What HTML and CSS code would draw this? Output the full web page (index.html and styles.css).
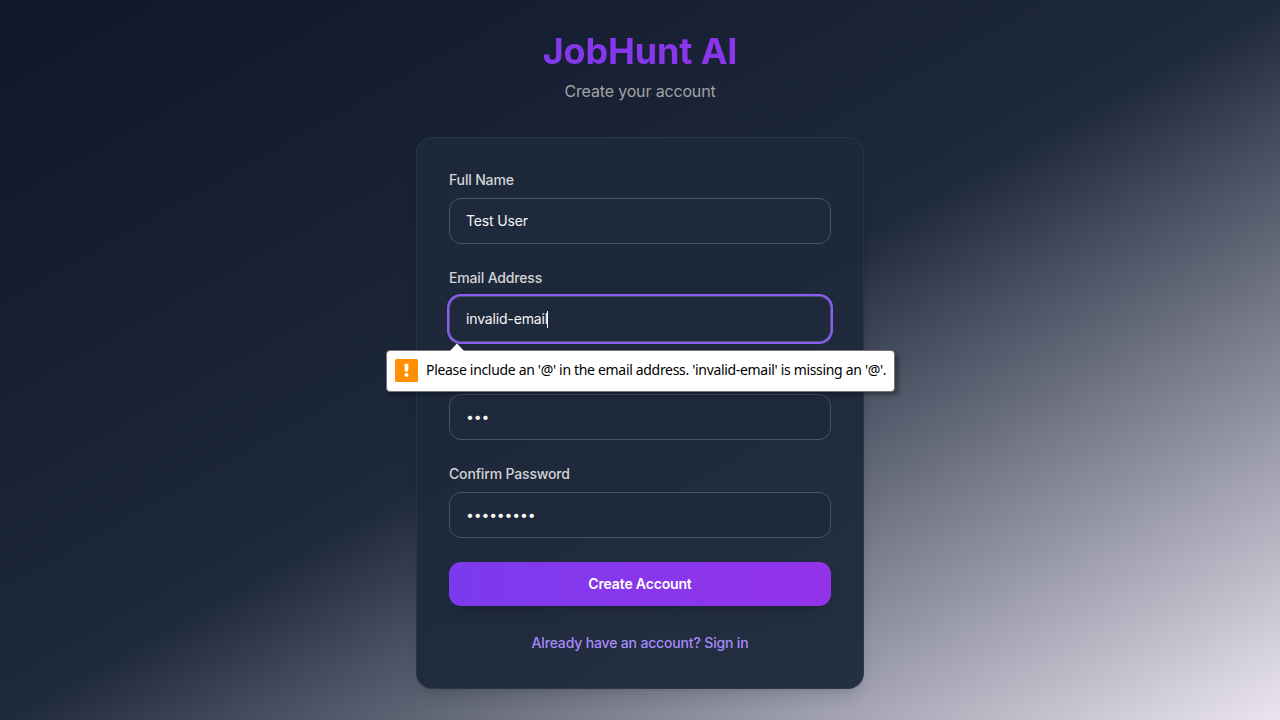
FILE: index.html
```html
<!DOCTYPE html>
<html lang="en">
<head>
<meta charset="utf-8">
<title>JobHunt AI</title>
<link rel="stylesheet" href="styles.css">
</head>
<body>
<main class="page">
  <header class="header">
    <h1 class="title">JobHunt AI</h1>
    <p class="subtitle">Create your account</p>
  </header>
  <section class="card">
    <div class="field">
      <div class="label">Full Name</div>
      <div class="input">Test User</div>
    </div>
    <div class="field">
      <div class="label">Email Address</div>
      <div class="input focused">invalid-email<span class="caret"></span>
        <div class="tooltip">
          <svg class="arrow" width="16" height="9" viewBox="0 0 16 9"><path d="M0 9 L8 0.5 L16 9Z" fill="#fff"/></svg>
          <svg class="warn" width="23" height="23" viewBox="0 0 23 23"><rect width="23" height="23" rx="1.5" fill="#ff8f00"/><path d="M9.5 4.8h4l-.4 7.8H9.9z" fill="#fff"/><circle cx="11.5" cy="16" r="2" fill="#fff"/></svg>
          <span class="message">Please include an '@' in the email address. 'invalid-email' is missing an '@'.</span>
        </div>
      </div>
    </div>
    <div class="field">
      <div class="label"></div>
      <div class="input"><span class="dots">•••</span></div>
    </div>
    <div class="field">
      <div class="label">Confirm Password</div>
      <div class="input"><span class="dots">•••••••••</span></div>
    </div>
    <div class="button">Create Account</div>
    <div class="link">Already have an account? Sign in</div>
  </section>
</main>
</body>
</html>
```
FILE: styles.css
```css
* { box-sizing: border-box; }
body {
  margin: 0;
  height: 720px;
  overflow: hidden;
  font-family: Inter, sans-serif;
  font-size: 14px;
  line-height: 20px;
  letter-spacing: -0.16px;
}
.page {
  height: 720px;
  padding-top: 31px;
  display: flex;
  flex-direction: column;
  align-items: center;
  background: linear-gradient(to bottom right, #0f172a, #1e293b 50%, #ebe5f1);
}
.header { text-align: center; margin-bottom: 34px; }
.title {
  margin: 0 0 8px;
  width: 448px;
  font-size: 36px;
  line-height: 40px;
  font-weight: 700;
  color: transparent;
  background: linear-gradient(to right, #7c3aed, #9333ea);
  background-clip: text;
  -webkit-background-clip: text;
}
.subtitle { margin: 0; font-size: 16px; line-height: 24px; color: #a3a3a3; }
.card {
  width: 448px;
  height: 552px;
  padding: 32px;
  display: flex;
  flex-direction: column;
  gap: 24px;
  border: 1px solid rgba(51, 65, 85, 0.5);
  border-radius: 16px;
  background: rgba(30, 41, 59, 0.95);
  box-shadow: 0 10px 15px -3px rgba(0, 0, 0, 0.1), 0 4px 6px -4px rgba(0, 0, 0, 0.1);
}
.label { height: 20px; margin-bottom: 8px; font-weight: 500; color: #d4d4d4; }
.input {
  position: relative;
  height: 46px;
  padding: 12px 16px;
  border: 1px solid #475569;
  border-radius: 12px;
  background: #1e293b;
  color: #f5f5f5;
}
.focused { box-shadow: 0 0 0 2px #8b5cf6; }
.caret {
  display: inline-block;
  width: 1px;
  height: 17px;
  margin-left: -1px;
  vertical-align: -4px;
  background: #fff;
}
.dots { font-size: 14px; }
.tooltip {
  position: absolute;
  z-index: 2;
  left: -64px;
  top: 53px;
  width: 509px;
  height: 42px;
  padding: 0 8px 2px;
  display: flex;
  align-items: center;
  gap: 8px;
  border: 1px solid #777;
  border-radius: 4px;
  background: #fff;
  color: #000;
  box-shadow: 3px 3px 4px rgba(0, 0, 0, 0.35);
}
.arrow { position: absolute; left: 62px; top: -8px; }
.warn { flex: none; }
.message {
  font-family: "Noto Sans", sans-serif;
  font-size: 14px;
  letter-spacing: -0.32px;
  white-space: nowrap;
}
.button {
  height: 44px;
  padding: 12px;
  text-align: center;
  font-weight: 600;
  color: #fff;
  border-radius: 12px;
  background: linear-gradient(to right, #7c3aed, #9333ea);
  box-shadow: 0 10px 15px -3px rgba(0, 0, 0, 0.1), 0 4px 6px -4px rgba(0, 0, 0, 0.1);
}
.link { margin-top: 3px; text-align: center; font-weight: 500; color: #a78bfa; }
```
